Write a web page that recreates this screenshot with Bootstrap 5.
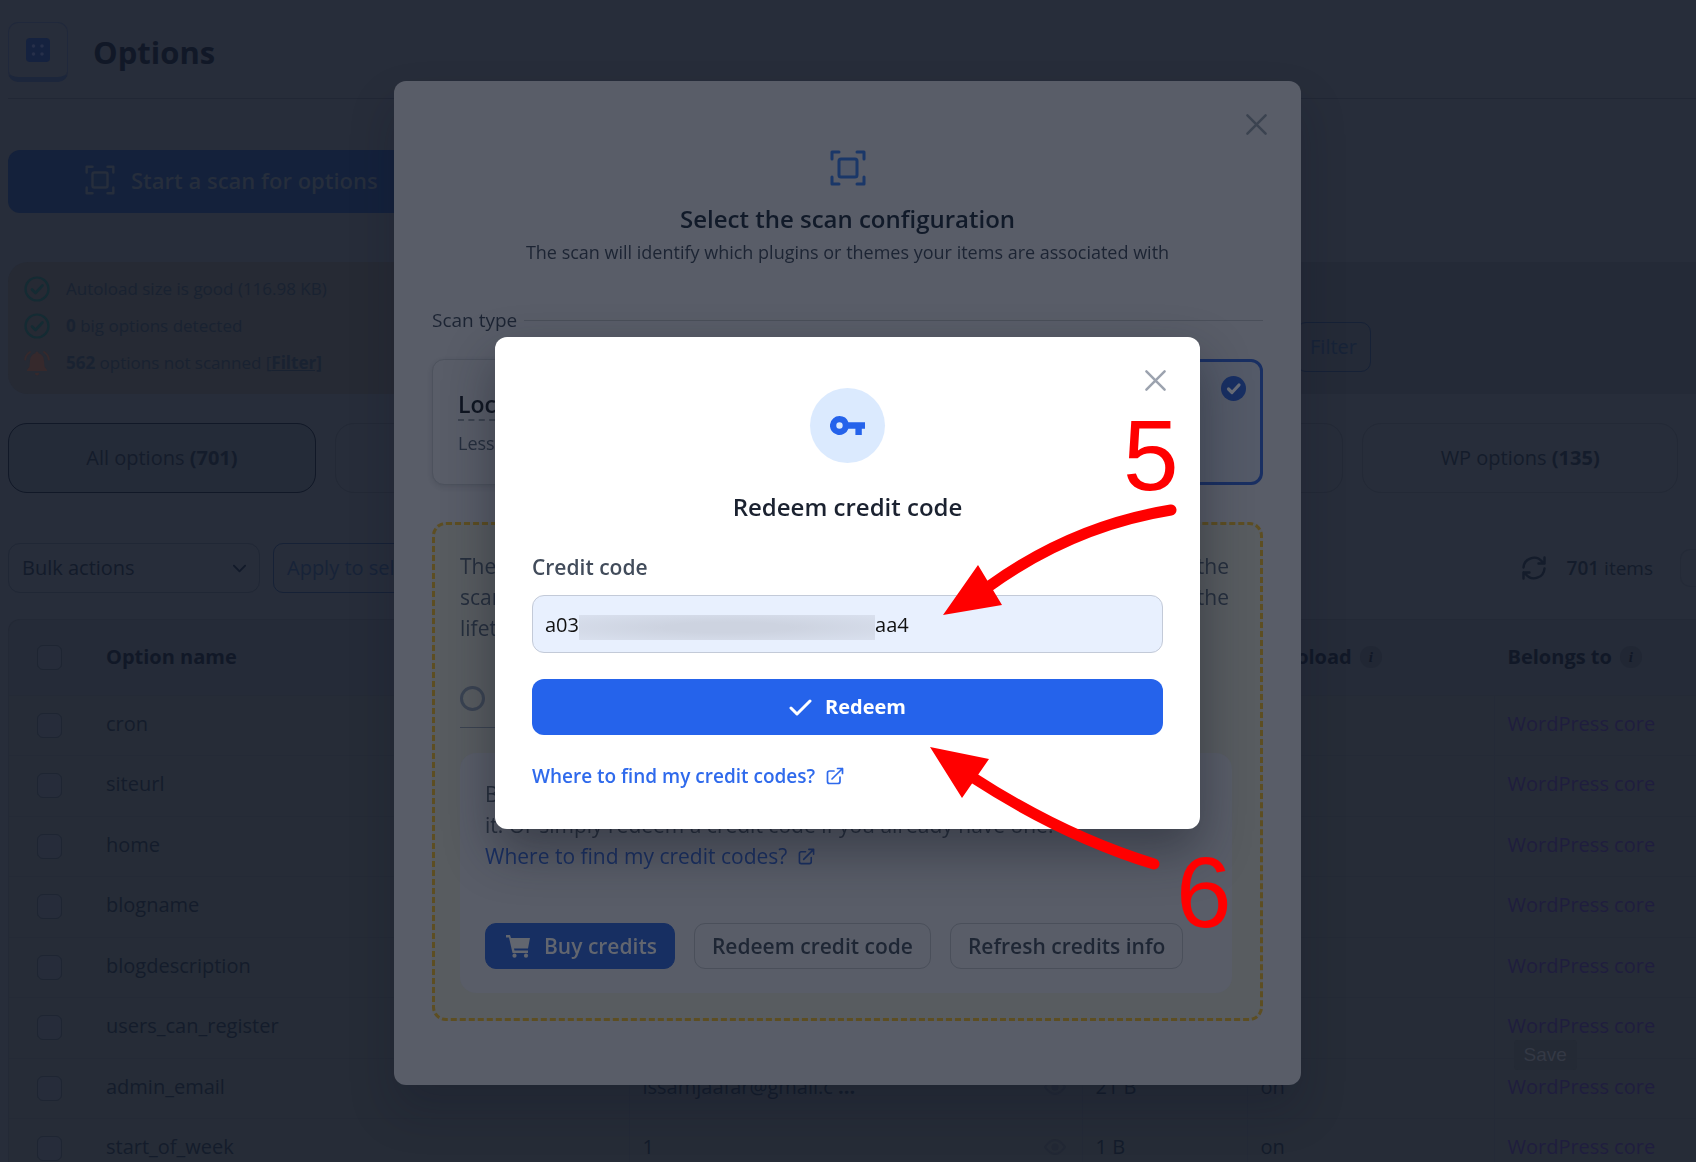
<!DOCTYPE html>
<html lang="en">
<head>
<meta charset="utf-8">
<meta name="viewport" content="width=device-width, initial-scale=1">
<title>Options</title>
<link href="https://cdn.jsdelivr.net/npm/bootstrap@5.3.0/dist/css/bootstrap.min.css" rel="stylesheet">
<style>
  body { font-family: "Open Sans", "Noto Sans", sans-serif; font-size: 19px; line-height: 28px; background: #272d3a; color: #141c2b; height: 100vh; overflow: hidden; }
  svg { display: block; flex: none; }
  .ico-line { fill: none; stroke: currentColor; stroke-linecap: round; stroke-linejoin: round; }
  button { font-family: inherit; }

  /* dimmed page */
  .page { padding: 22px 0 0 8px; }
  .page-head { height: 77px; border-bottom: 1px solid #212735; gap: 25px; }
  .app-tile { width: 60px; height: 60px; border: 1px solid #20283b; border-bottom: 5px solid #1c263b; border-radius: 10px; color: #15223f; }
  .page-title { font-size: 31px; line-height: 60px; font-weight: 700; color: #111827; margin: 0; }
  .scan-btn { width: 480px; height: 63px; margin-top: 51px; padding: 0 0 3px 77px; gap: 16px; background: #14213b; border: 0; border-radius: 12px; color: #262e3c; font-size: 22px; font-weight: 600; }
  .info-row { margin-top: 49px; height: 132px; }
  .notice { width: 480px; padding: 8px 16px; background: #262a34; border-radius: 20px; color: #192231; font-size: 17px; line-height: 37px; }
  .notice-line { gap: 16px; height: 37px; }
  .filter-side { background: #242a37; padding-top: 38px; }
  .line-btn { height: 50px; border: 1px solid #162136; border-radius: 10px; background: transparent; color: #172338; font-size: 20px; padding: 0 13px; }
  .filter-btn { margin-right: 325px; }
  .tab-row { margin-top: 29px; gap: 19px; padding-right: 18px; }
  .tab-btn { height: 70px; flex: 41 1 0; border: 1px solid #232936; border-radius: 19px; background: transparent; color: #141c2b; font-size: 20px; padding: 0; }
  .tab-end { flex-grow: 40; }
  .tab-on { border-color: #111827; background: #242b38; flex-grow: 39; }
  .tool-row { margin-top: 50px; gap: 13px; height: 50px; }
  .bulk { width: 252px; height: 50px; border: 1px solid #202735; border-radius: 12px; background-color: transparent; color: #131b2a; font-size: 20px; padding: 0 13px; 
    background-image: url("data:image/svg+xml,%3csvg xmlns='http://www.w3.org/2000/svg' viewBox='0 0 16 16'%3e%3cpath fill='none' stroke='%23121a2a' stroke-linecap='round' stroke-linejoin='round' stroke-width='2' d='m2 5 6 6 6-6'/%3e%3c/svg%3e"); background-size: 15px 15px; }
  .pager { gap: 21px; color: #141c2b; }
  .pager-box { width: 16px; height: 38px; border: 1px solid #242a37; border-right: 0; border-radius: 10px 0 0 10px; margin-left: 6px; }
  .grid-wrap { margin-top: 26px; border: 1px solid #232936; border-right: 0; border-radius: 12px 0 0 0; background: #262c37; overflow: hidden; }
  .grid { margin: 0; table-layout: fixed; width: 100%; --bs-table-bg: transparent; --bs-table-color: #141c2b; --bs-table-border-color: #242a36; }
  .grid > thead th { background: #252b38; height: 75px; padding: 0; vertical-align: middle; font-size: 20px; font-weight: 700; color: #111827; border-bottom: 1px solid #242a36; }
  .grid > tbody td { height: 60px; padding: 0 0 3px; vertical-align: middle; font-size: 20px; border-bottom: 1px solid #242a36; }
  .grid > tbody td:first-child { padding: 0; }
  .grid > tbody tr:nth-child(even) td { height: 61px; }
  .grid .cell-line { padding-left: 13px; border-left: 1px solid #242a37; }
  .grid thead .cell-line { border-left-color: transparent; }
  .grid a { color: #1f1d3e; text-decoration: none; }
  .grid .form-check-input { width: 25px; height: 25px; margin: 0 0 0 28px; border: 1px solid #1e2532; border-radius: 6px; background: #262c3a; display: block; }
  .hint { width: 22px; height: 22px; border-radius: 50%; background: #212734; font: italic 700 15px/22px "Liberation Serif", serif; text-align: center; }
  .ghost-save { position: absolute; z-index: 1; top: -19px; left: 19px; height: 30px; border: 0; border-radius: 4px; padding: 0 10px; background: #242a35; color: #343945; font: 19px/30px "Liberation Sans", sans-serif; }

  /* dialogs */
  .layer { padding: 4px 1px 0 0; pointer-events: none; }
  .layer > section { pointer-events: auto; border-radius: 12px; }
  .close-x { position: absolute; padding: 0; border: 0; background: transparent; line-height: 0; }
  .dlg-title { font-size: 24px; line-height: 32px; font-weight: 600; margin: 0; }
  .scan-dlg { width: 907px; padding: 69px 38px 64px; background: #595d68; color: #1c2433; box-shadow: 0 25px 45px rgba(12,18,36,.22); }
  .scan-dlg .close-x { top: 32px; right: 33px; color: #3b4350; }
  .scan-dlg .dlg-title { color: #111a29; margin-top: 17px; }
  .sub { font-size: 18px; margin-top: 3px; color: #1c2433; }
  .legend-row { margin-top: 40px; gap: 7px; }
  .legend-row hr { margin: 0; border-color: #4a4f5a; opacity: 1; }
  .kind-row { margin-top: 25px; gap: 25px; }
  .kind { height: 126px; border: 1px solid #4d525d; border-radius: 12px; padding: 29px 25px; text-align: left; background: #595d68; box-shadow: 0 2px 5px rgba(30,35,50,.16); color: #252e3d; font-size: 18px; }
  .kind-on { border: 3px solid #192f62; background: #545a68; box-shadow: none; }
  .kind-name { font-size: 23px; line-height: 30px; font-weight: 600; color: #0f1521; border-bottom: 2px dashed #3c434f; }
  .kind-tick { position: absolute; top: 14px; right: 14px; }
  .credit-box { margin-top: 37px; padding: 26px 28px 25px 25px; border: 3px dashed #5d4e22; border-radius: 14px; background: #585c60; font-size: 21px; line-height: 31px; color: #252e3d; }
  .credit-text { padding-right: 3px; }
  .radio-row { width: 50%; margin-top: 42px; height: 42px; border-bottom: 1px solid #3b4350; }
  .radio-row .form-check-input { width: 25px; height: 25px; margin: 0; border: 3px solid #3a4352; background: transparent; }
  .buy-box { margin-top: 25px; padding: 26px 25px 24px; border-radius: 16px; background: #595d68; color: #252d3b; }
  .buy-box a { color: #192f62; text-decoration: none; gap: 11px; }
  .buy-row { margin-top: 51px; gap: 19px; }
  .soft-btn { height: 46px; border: 1px solid #4a4f5a; border-radius: 11px; background: transparent; color: #1e2634; font-size: 21px; font-weight: 600; padding: 0 17px; }
  .buy-btn { background: #172f62; border-color: #172f62; color: #62666f; gap: 14px; padding-left: 20px; }

  .code-dlg { width: 705px; padding: 51px 37px 39px 37px; background: #fff; color: #1b2230; box-shadow: 0 22px 50px rgba(20,24,36,.45); }
  .code-dlg .close-x { top: 32px; right: 33px; color: #9ca3af; }
  .key-disc { width: 75px; height: 75px; border-radius: 50%; background: #dbeafe; }
  .code-dlg .dlg-title { margin-top: 28px; color: #1b2230; }
  .code-label { margin: 30px 0 14px; font-size: 21px; font-weight: 600; color: #424c5b; display: block; }
  .code-input, .code-input:focus { height: 58px; padding: 0 12px; border: 1px solid #c3cad8; border-radius: 12px; background: #e8f0fe; color: #111; font-size: 20px; }
  .code-blur { position: absolute; left: 47px; top: 20px; width: 296px; height: 25px; background: radial-gradient(ellipse at center, #cdd3e0 30%, #d9e0ee 100%); }
  .redeem-btn { height: 56px; margin-top: 26px; gap: 13px; border: 0; border-radius: 12px; background: #2563eb; color: #fff; font-size: 20px; font-weight: 700; }
  .code-link { margin-top: 27px; gap: 11px; font-weight: 600; color: #2f6aec; text-decoration: none; }
  .arrows { position: absolute; left: 0; top: 0; overflow: visible; pointer-events: none; }
  .arrows text { font-family: "Liberation Sans", Arial, sans-serif; font-size: 100px; fill: red; }
</style>
</head>
<body>
<svg class="d-none" aria-hidden="true">
  <symbol id="i-scan" viewBox="0 0 36 36"><path class="ico-line" stroke-width="3" d="M2 9V2h7M27 2h7v7M34 27v7h-7M9 34H2v-7"/><rect x="9" y="9" width="18" height="18" rx="2" fill="currentColor" fill-opacity=".12" stroke="currentColor" stroke-width="3"/></symbol>
  <symbol id="i-x" viewBox="0 0 24 24"><path class="ico-line" stroke-width="2.6" d="M2.500 2.500l19 19M21.500 2.500l-19 19"/></symbol>
  <symbol id="i-out" viewBox="0 0 18 18"><path class="ico-line" stroke-width="1.700" d="M8 4H3.500Q1.500 4 1.500 6v8.500q0 2 2 2H12q2 0 2-2V10M6 12L16.500 1.500M11.500 1.500h5v5"/></symbol>
  <symbol id="i-ok" viewBox="0 0 26 26"><circle class="ico-line" cx="13" cy="13" r="11.500" stroke-width="2.200"/><path class="ico-line" stroke-width="2.600" d="M8 13.500l3.500 3.500 7-7.500"/></symbol>
</svg>

<main class="page">
  <header class="page-head d-flex align-items-start">
    <div class="app-tile d-flex justify-content-center align-items-center">
      <svg width="24" height="24" viewBox="0 0 24 24"><rect width="24" height="24" rx="4" fill="currentColor"/><g fill="#27304a"><circle cx="7.500" cy="8" r="1.800"/><circle cx="16" cy="8" r="1.800"/><circle cx="7.500" cy="16" r="1.800"/><circle cx="16" cy="16" r="1.800"/></g></svg>
    </div>
    <h1 class="page-title">Options</h1>
  </header>

  <button type="button" class="scan-btn d-flex align-items-center">
    <svg width="30" height="30"><use href="#i-scan"/></svg>Start a scan for options
  </button>

  <div class="info-row d-flex">
    <div class="notice">
      <div class="notice-line d-flex align-items-center"><svg width="26" height="26" color="#142b33"><use href="#i-ok"/></svg><span>Autoload size is good (116.98 KB)</span></div>
      <div class="notice-line d-flex align-items-center"><svg width="26" height="26" color="#142b33"><use href="#i-ok"/></svg><span><b>0</b> big options detected</span></div>
      <div class="notice-line d-flex align-items-center"><svg width="26" height="26" viewBox="0 0 26 26" color="#36292c"><path fill="currentColor" d="M13 1.500q1.600 0 1.600 1.800 5 1.300 5.400 7.200l.5 6 2.500 3.500v1H3v-1l2.500-3.500.5-6q.4-5.900 5.400-7.200 0-1.800 1.600-1.800zM10.800 23h4.400q-.4 2.500-2.200 2.500T10.800 23z"/><path class="ico-line" stroke-width="2" d="M6 2Q1.500 5 1.200 9.500M20 2q4.500 3 4.800 7.500"/></svg><span><b>562</b> options not scanned <a class="text-reset fw-bold" href="#"><span class="fw-normal">[</span>Filter]</a></span></div>
    </div>
    <div class="filter-side flex-grow-1 d-flex justify-content-end align-items-center">
      <button type="button" class="line-btn filter-btn">Filter</button>
    </div>
  </div>

  <div class="tab-row d-flex">
    <button type="button" class="tab-btn tab-on">All options <b>(701)</b></button>
    <button type="button" class="tab-btn"></button>
    <button type="button" class="tab-btn"></button>
    <button type="button" class="tab-btn"></button>
    <button type="button" class="tab-btn tab-end">WP options <b>(135)</b></button>
  </div>

  <div class="tool-row d-flex align-items-center">
    <select class="form-select bulk" aria-label="Bulk actions"><option>Bulk actions</option></select>
    <button type="button" class="line-btn">Apply to selected</button>
    <div class="pager d-flex align-items-center ms-auto">
      <svg width="24" height="24" viewBox="0 0 24 24"><path class="ico-line" stroke-width="2.400" d="M1.500 11.500A10.500 10.500 0 0 1 20 5.500l2.500 2M22.500 1.500v6h-6M22.500 12.500A10.500 10.500 0 0 1 4 18.500l-2.500-2M1.500 22.500v-6h6"/></svg>
      <span><span class="fw-semibold">701</span> items</span>
      <span class="pager-box"></span>
    </div>
  </div>

  <div class="grid-wrap">
    <table class="table grid">
      <colgroup><col style="width:97px"><col style="width:523px"><col style="width:453px"><col style="width:165px"><col style="width:247px"><col></colgroup>
      <thead><tr>
        <th><input class="form-check-input" type="checkbox" aria-label="Select all"></th>
        <th>Option name</th><th></th><th></th>
        <th class="cell-line"><span class="d-flex align-items-center gap-2">Autoload <span class="hint">i</span></span></th>
        <th class="cell-line"><span class="d-flex align-items-center gap-2">Belongs to <span class="hint">i</span></span></th>
      </tr></thead>
      <tbody>
        <tr><td><input class="form-check-input" type="checkbox" aria-label="cron"></td><td>cron</td><td class="cell-line"></td><td></td><td class="cell-line"></td><td class="cell-line"><a href="#">WordPress core</a></td></tr>
        <tr><td><input class="form-check-input" type="checkbox" aria-label="siteurl"></td><td>siteurl</td><td class="cell-line"></td><td></td><td class="cell-line"></td><td class="cell-line"><a href="#">WordPress core</a></td></tr>
        <tr><td><input class="form-check-input" type="checkbox" aria-label="home"></td><td>home</td><td class="cell-line"></td><td></td><td class="cell-line"></td><td class="cell-line"><a href="#">WordPress core</a></td></tr>
        <tr><td><input class="form-check-input" type="checkbox" aria-label="blogname"></td><td>blogname</td><td class="cell-line"></td><td></td><td class="cell-line"></td><td class="cell-line"><a href="#">WordPress core</a></td></tr>
        <tr><td><input class="form-check-input" type="checkbox" aria-label="blogdescription"></td><td>blogdescription</td><td class="cell-line"></td><td></td><td class="cell-line"></td><td class="cell-line"><a href="#">WordPress core</a></td></tr>
        <tr><td><input class="form-check-input" type="checkbox" aria-label="users_can_register"></td><td>users_can_register</td><td class="cell-line"></td><td></td><td class="cell-line"></td><td class="cell-line"><a href="#">WordPress core</a></td></tr>
        <tr><td><input class="form-check-input" type="checkbox" aria-label="admin_email"></td><td>admin_email</td><td class="cell-line"><span class="d-flex align-items-center justify-content-between pe-3"><span>issamjaafar@gmail.c <b>...</b></span><svg width="22" height="16" viewBox="0 0 22 16" color="#222835"><path class="ico-line" stroke-width="2" d="M1 8q10-14 20 0-10 14-20 0z"/><circle cx="11" cy="8" r="3.500" fill="currentColor"/></svg></span></td><td class="cell-line">21 B</td><td class="cell-line">on</td><td class="cell-line position-relative"><button type="button" class="ghost-save">Save</button><a href="#">WordPress core</a></td></tr>
        <tr><td><input class="form-check-input" type="checkbox" aria-label="start_of_week"></td><td>start_of_week</td><td class="cell-line"><span class="d-flex align-items-center justify-content-between pe-3"><span>1</span><svg width="22" height="16" viewBox="0 0 22 16" color="#222835"><path class="ico-line" stroke-width="2" d="M1 8q10-14 20 0-10 14-20 0z"/><circle cx="11" cy="8" r="3.500" fill="currentColor"/></svg></span></td><td class="cell-line">1 B</td><td class="cell-line">on</td><td class="cell-line"><a href="#">WordPress core</a></td></tr>
      </tbody>
    </table>
  </div>
</main>

<div class="layer position-fixed top-0 start-0 w-100 h-100 d-flex align-items-center justify-content-center">
  <section class="scan-dlg position-relative" role="dialog" aria-label="Select the scan configuration">
    <button type="button" class="close-x" aria-label="Close"><svg width="23" height="23"><use href="#i-x"/></svg></button>
    <svg class="mx-auto" width="36" height="36" color="#1a3768"><use href="#i-scan"/></svg>
    <h2 class="dlg-title text-center">Select the scan configuration</h2>
    <p class="sub text-center mb-0">The scan will identify which plugins or themes your items are associated with</p>
    <div class="legend-row d-flex align-items-center"><span>Scan type</span><hr class="flex-grow-1"></div>
    <div class="kind-row d-flex">
      <button type="button" class="kind flex-fill w-50 d-flex flex-column align-items-start"><span class="kind-name">Local</span><span class="mt-2">Less</span></button>
      <button type="button" class="kind kind-on flex-fill w-50 position-relative" aria-label="Online scan">
        <svg class="kind-tick" width="25" height="25" viewBox="0 0 25 25"><circle cx="12.500" cy="12.500" r="12.500" fill="#182f63"/><path d="M7.500 13l3.500 3.500 7-7.500" fill="none" stroke="#6a6e79" stroke-width="3.200" stroke-linecap="round" stroke-linejoin="round"/></svg>
      </button>
    </div>
    <div class="credit-box">
      <div class="credit-text d-flex justify-content-between"><span>The</span><span>the</span></div>
      <div class="credit-text d-flex justify-content-between"><span>scan</span><span>the</span></div>
      <div>lifetime</div>
      <div class="radio-row"><input class="form-check-input d-block" type="radio" aria-label="Credits"></div>
      <div class="buy-box">
        <div>Buy<br>it. Or simply redeem a credit code if you already have one.</div>
        <a href="#" class="d-inline-flex align-items-center align-top">Where to find my credit codes? <svg width="17" height="17"><use href="#i-out"/></svg></a>
        <div class="buy-row d-flex">
          <button type="button" class="soft-btn buy-btn d-flex align-items-center"><svg width="24" height="23" viewBox="0 0 24 23"><path fill="currentColor" d="M0 0h4l1 3h19l-2 10.500H8l.5 2H22V18H6.500L3 2.500H0z"/><circle cx="8.500" cy="20.700" r="2.100" fill="currentColor"/><circle cx="20" cy="20.700" r="2.100" fill="currentColor"/></svg>Buy credits</button>
          <button type="button" class="soft-btn">Redeem credit code</button>
          <button type="button" class="soft-btn">Refresh credits info</button>
        </div>
      </div>
    </div>
  </section>
</div>

<div class="layer position-fixed top-0 start-0 w-100 h-100 d-flex align-items-center justify-content-center">
  <section class="code-dlg position-relative" role="dialog" aria-label="Redeem credit code">
    <button type="button" class="close-x" aria-label="Close"><svg width="23" height="23"><use href="#i-x"/></svg></button>
    <div class="key-disc mx-auto d-flex align-items-center justify-content-center">
      <svg width="35" height="20" viewBox="0 0 35 20"><path fill="#2563eb" fill-rule="evenodd" d="M9.500 0A9.500 9.500 0 0 1 18.400 6.300H35v6.400h-3.200V19h-6.400v-6.300h-7A9.500 9.500 0 1 1 9.500 0zm0 6.300a3.200 3.200 0 1 0 0 6.400 3.200 3.200 0 0 0 0-6.400z"/></svg>
    </div>
    <h2 class="dlg-title text-center">Redeem credit code</h2>
    <label class="code-label" for="code">Credit code</label>
    <div class="position-relative">
      <input id="code" class="form-control code-input" type="text" value="a03&nbsp;&nbsp;&nbsp;&nbsp;&nbsp;&nbsp;&nbsp;&nbsp;&nbsp;&nbsp;&nbsp;&nbsp;&nbsp;&nbsp;&nbsp;&nbsp;&nbsp;&nbsp;&nbsp;&nbsp;&nbsp;&nbsp;&nbsp;&nbsp;&nbsp;&nbsp;&nbsp;&nbsp;&nbsp;&nbsp;&nbsp;&nbsp;&nbsp;&nbsp;&nbsp;&nbsp;&nbsp;&nbsp;&nbsp;&nbsp;&nbsp;&nbsp;&nbsp;&nbsp;&nbsp;&nbsp;&nbsp;&nbsp;&nbsp;&nbsp;&nbsp;&nbsp;&nbsp;&nbsp;&nbsp;&nbsp;&nbsp;aa4">
      <span class="code-blur"></span>
    </div>
    <button type="submit" class="redeem-btn w-100 d-flex align-items-center justify-content-center"><svg width="23" height="17" viewBox="0 0 23 17"><path class="ico-line" stroke-width="3" d="M2 9l6 6L21 2"/></svg>Redeem</button>
    <a class="code-link d-flex align-items-center" href="#">Where to find my credit codes? <svg width="18" height="18"><use href="#i-out"/></svg></a>
    <svg class="arrows" width="705" height="492" viewBox="495 337 705 492">
      <text x="1123" y="490">5</text>
      <text x="1176" y="927">6</text>
      <g fill="none" stroke="red" stroke-width="11" stroke-linecap="round"><path d="M1171 510Q1072 526 988 587"/><path d="M1154 864Q1063 836 972 777"/></g>
      <path fill="red" d="M943 615l35-50 24 40zM930 747l59 12-27 39z"/>
    </svg>
  </section>
</div>
<script src="https://cdn.jsdelivr.net/npm/bootstrap@5.3.0/dist/js/bootstrap.bundle.min.js"></script>
</body>
</html>
